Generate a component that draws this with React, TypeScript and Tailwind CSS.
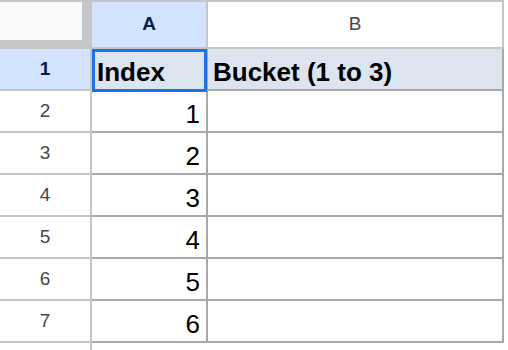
const values = [1, 2, 3, 4, 5, 6];

function RowHead({ n, active }: { n: number; active?: boolean }) {
  return (
    <div
      className={`w-[92px] shrink-0 flex items-center justify-center border-r-2 border-b-2 border-[#c4c7c5] text-[19px] ${
        active ? "bg-[#d3e3fd] text-[#041e49] font-bold" : "bg-white text-[#444746]"
      }`}
    >
      {n}
    </div>
  );
}

export default function App() {
  return (
    <div
      className="w-[508px] h-[350px] overflow-hidden bg-white"
      style={{ fontFamily: '"Liberation Sans", Arial, sans-serif' }}
    >
      {/* column headers */}
      <div className="flex h-[49px]">
        <div className="w-[92px] shrink-0 bg-[#c4c7c5] pt-[2px]">
          <div className="w-[82px] h-[38px] bg-[#f8f9fa]" />
        </div>
        <div className="w-[116px] shrink-0 bg-[#c4c7c5] pt-[2px] pr-[2px] pb-[2px]">
          <div className="h-full bg-[#d3e3fd] flex items-center justify-center text-[19px] font-bold text-[#041e49]">
            A
          </div>
        </div>
        <div className="w-[296px] shrink-0 bg-[#c4c7c5] pt-[2px] pr-[2px] pb-[2px]">
          <div className="h-full bg-white flex items-center justify-center text-[19px] text-[#444746]">
            B
          </div>
        </div>
      </div>

      {/* row 1 */}
      <div className="flex h-[42px]">
        <RowHead n={1} active />
        <div className="relative w-[116px] shrink-0 bg-[#dce5ef] border-r-2 border-b-2 border-[#a8a8a8] flex items-end pl-[5px] pb-[2px] text-[26px] leading-[30px] font-bold text-black">
          Index
          <div className="absolute left-0 top-0 w-[115px] h-[43px] border-[3px] border-[#1a73e8]" />
        </div>
        <div className="w-[296px] shrink-0 bg-[#dce5ef] border-r-2 border-b-2 border-[#a8a8a8] flex items-end pl-[5px] pb-[2px] text-[26px] leading-[30px] font-bold text-black">
          Bucket (1 to 3)
        </div>
      </div>

      {values.map((v, i) => (
        <div key={v} className="flex h-[42px]">
          <RowHead n={i + 2} />
          <div className="w-[116px] shrink-0 border-r-2 border-b-2 border-[#a8a8a8] flex items-end justify-end pr-[6px] pb-[2px] text-[26px] leading-[30px] text-black">
            {v}
          </div>
          <div className="w-[296px] shrink-0 border-r-2 border-b-2 border-[#a8a8a8]" />
        </div>
      ))}

      {/* start of row 8, below the fold */}
      <div className="flex h-[42px]">
        <div className="w-[92px] shrink-0 border-r-2 border-[#c4c7c5]" />
      </div>
    </div>
  );
}
